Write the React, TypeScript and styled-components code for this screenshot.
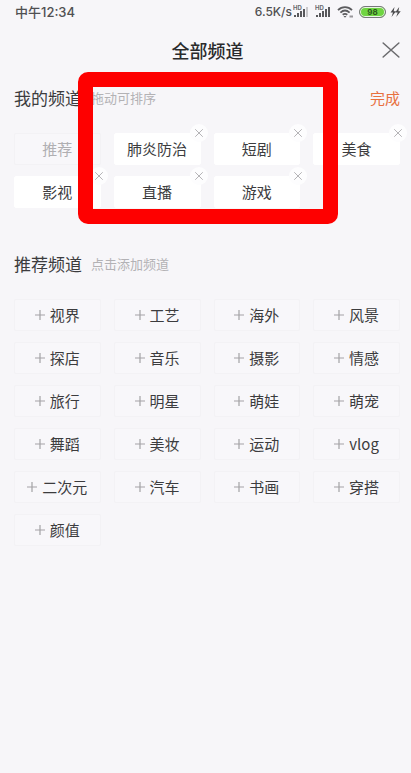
import React from 'react';
import styled, { createGlobalStyle } from 'styled-components';

const GlobalStyle = createGlobalStyle`
  * { box-sizing: border-box; }
  body {
    margin: 0;
    background: #f7f6f9;
    color: #3c3c3e;
    font-family: "Noto Sans CJK SC", "Noto Sans", sans-serif;
  }
  button { font-family: inherit; border: 0; padding: 0; background: none; color: inherit; cursor: pointer; }
`;

const Page = styled.main`
  min-height: 100vh;
  background: #f7f6f9;
`;

const StatusBar = styled.div`
  display: flex;
  align-items: center;
  justify-content: space-between;
  height: 24px;
  padding: 0 10px 0 15px;
  font: 500 12px/24px Inter, "Noto Sans CJK SC", sans-serif;
  color: #505052;
`;

const Clock = styled.span`
  font-size: 13px;
`;

const StatusIcons = styled.div`
  display: flex;
  align-items: center;
`;

const Speed = styled.span`
  margin-right: 1px;
`;

const SignalIcon = styled.svg`
  width: 16px;
  height: 14px;
  margin-right: 6px;
`;

const WifiIcon = styled.svg`
  width: 17px;
  height: 14px;
  margin-right: 5px;
`;

const Battery = styled.span`
  display: flex;
  align-items: center;
  justify-content: center;
  width: 27px;
  height: 12px;
  margin-right: 4px;
  border: 1px solid #77777a;
  border-radius: 6px;
  background: #6fd541;
  box-shadow: inset 0 0 0 1px #e9f5e4;
  color: #2c5a1c;
  font: 700 8px/10px Inter, sans-serif;
`;

const BoltIcon = styled.svg`
  width: 11px;
  height: 10px;
`;

const Header = styled.header`
  display: grid;
  grid-template-columns: 40px 1fr 40px;
  align-items: center;
  height: 52px;
`;

const Title = styled.h1`
  grid-column: 2;
  margin: 0;
  padding-left: 4px;
  text-align: center;
  font-size: 18px;
  line-height: 28px;
  font-weight: 500;
  color: #2a2a2c;
`;

const CloseButton = styled.button`
  display: flex;
  align-items: center;
  justify-content: center;
  width: 40px;
  height: 40px;
  svg { width: 18px; height: 16px; }
`;

const Section = styled.section`
  position: relative;
  margin-top: 8px;
  padding: 0 11px 0 14px;
`;

const SectionHead = styled.div`
  display: flex;
  align-items: center;
  height: 28px;
  margin-bottom: 21px;
`;

const SectionTitle = styled.h2`
  margin: 0;
  font-size: 17px;
  line-height: 28px;
  font-weight: 400;
`;

const Hint = styled.span`
  margin-left: 9px;
  font-size: 13px;
  line-height: 28px;
  color: #b3b2b5;
`;

const DoneButton = styled.button`
  && { color: #e8703f; }
  margin-left: auto;
  font-size: 15px;
  line-height: 28px;
`;

const ChipGrid = styled.ul`
  display: grid;
  grid-template-columns: repeat(4, 1fr);
  gap: 11px 13px;
  margin: 0;
  padding: 0;
  list-style: none;
`;

const ChipCell = styled.li`
  position: relative;
  display: flex;
`;

const Chip = styled.button<{ $kind: 'fixed' | 'mine' | 'suggested' }>`
  && {
    color: ${({ $kind }) => ($kind === 'fixed' ? '#b0afb2' : '#3c3c3e')};
    background: ${({ $kind }) => ($kind === 'mine' ? '#ffffff' : '#f8f7fa')};
    border: 1px solid ${({ $kind }) => ($kind === 'mine' ? '#ffffff' : '#f3f2f5')};
  }
  display: flex;
  flex: 1;
  align-items: center;
  justify-content: center;
  gap: 5px;
  height: 32px;
  border-radius: 2px;
  font-size: 15px;
  line-height: 22px;
  white-space: nowrap;
  svg { width: 10px; height: 10px; }
`;

const RemoveButton = styled.button`
  position: absolute;
  top: -9px;
  right: -7px;
  display: flex;
  align-items: center;
  justify-content: center;
  width: 18px;
  height: 18px;
  && { background: #fdfdfe; }
  border-radius: 50%;
  svg { width: 8px; height: 8px; }
`;

const Highlight = styled.div`
  position: absolute;
  top: -12px;
  bottom: -16px;
  left: 78px;
  right: 73px;
  border: 15px solid #fe0000;
  border-radius: 10px;
  pointer-events: none;
`;

const Suggested = styled(Section)`
  margin-top: 42px;
`;

const Signal = ({ level }: { level: number }) => (
  <SignalIcon viewBox="0 0 16 14" aria-hidden="true">
    <text x="0" y="5" fontSize="6" fontWeight="700" fill="#69696c" fontFamily="Inter, sans-serif">HD</text>
    {[0, 1, 2, 3, 4].map((i) => (
      <rect
        key={i}
        x={1 + i * 3}
        y={[10, 8, 6, 4, 2][i]}
        width="2"
        height={[2, 4, 6, 8, 10][i]}
        fill={i < level ? '#58585b' : '#c9c8cb'}
      />
    ))}
  </SignalIcon>
);

const Cross = ({ color, width }: { color: string; width: number }) => (
  <svg viewBox="0 0 16 16" preserveAspectRatio="none" aria-hidden="true">
    <path d="M1 1 15 15M15 1 1 15" fill="none" stroke={color} strokeWidth={width} strokeLinecap="round" />
  </svg>
);

const Plus = () => (
  <svg viewBox="0 0 10 10" aria-hidden="true">
    <path d="M5 0V10M0 5H10" fill="none" stroke="#a3a2a5" strokeWidth="1.2" />
  </svg>
);

const mine = ['推荐', '肺炎防治', '短剧', '美食', '影视', '直播', '游戏'];
const suggested = [
  '视界', '工艺', '海外', '风景',
  '探店', '音乐', '摄影', '情感',
  '旅行', '明星', '萌娃', '萌宠',
  '舞蹈', '美妆', '运动', 'vlog',
  '二次元', '汽车', '书画', '穿搭',
  '颜值',
];

export default function App() {
  return (
    <Page>
      <GlobalStyle />
      <StatusBar>
        <Clock>中午12:34</Clock>
        <StatusIcons>
          <Speed>6.5K/s</Speed>
          <Signal level={4} />
          <Signal level={5} />
          <WifiIcon viewBox="0 0 17 14" aria-hidden="true">
            <g fill="none" stroke="#5c5c5f" strokeWidth="1.8">
              <path d="M1 5.2C5 1.2 11 1.2 15 5.2" />
              <path d="M3.4 7.6C6.2 5 9.8 5 12.6 7.6" />
              <path d="M5.7 9.8C7.2 8.6 8.8 8.6 10.3 9.8" />
            </g>
            <path d="M6.5 11 8 12.8 9.5 11Z" fill="#5c5c5f" />
            <path d="M12.5 11.5H16" stroke="#98979a" strokeWidth="2" />
          </WifiIcon>
          <Battery>98</Battery>
          <BoltIcon viewBox="0 0 11 10" aria-hidden="true">
            <path d="M4.5 0 .5 5.5H3L1.5 10 6 4.3H3.7ZM9.2 0 5.2 5.5H7.7L6.2 10 10.7 4.3H8.4Z" fill="#4b4b4e" />
          </BoltIcon>
        </StatusIcons>
      </StatusBar>

      <Header>
        <Title>全部频道</Title>
        <CloseButton aria-label="关闭">
          <Cross color="#6c6c6f" width={1.3} />
        </CloseButton>
      </Header>

      <Section>
        <SectionHead>
          <SectionTitle>我的频道</SectionTitle>
          <Hint>拖动可排序</Hint>
          <DoneButton>完成</DoneButton>
        </SectionHead>
        <ChipGrid>
          {mine.map((name, i) => (
            <ChipCell key={name}>
              <Chip $kind={i === 0 ? 'fixed' : 'mine'}>{name}</Chip>
              {i > 0 && (
                <RemoveButton aria-label={`删除${name}`}>
                  <Cross color="#b5b4b7" width={2} />
                </RemoveButton>
              )}
            </ChipCell>
          ))}
        </ChipGrid>
        <Highlight />
      </Section>

      <Suggested>
        <SectionHead>
          <SectionTitle>推荐频道</SectionTitle>
          <Hint>点击添加频道</Hint>
        </SectionHead>
        <ChipGrid>
          {suggested.map((name) => (
            <ChipCell key={name}>
              <Chip $kind="suggested">
                <Plus />
                {name}
              </Chip>
            </ChipCell>
          ))}
        </ChipGrid>
      </Suggested>
    </Page>
  );
}
